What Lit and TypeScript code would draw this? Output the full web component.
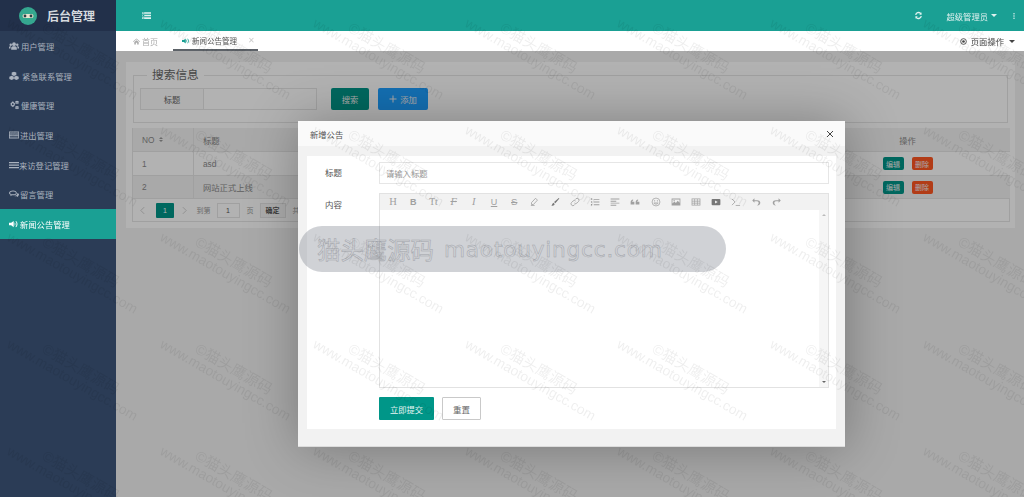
import { LitElement, html, css, svg } from "lit";
import { customElement } from "lit/decorators.js";

const I = (size: number, body: unknown, vb = "0 0 16 16") =>
  html`<svg class="ic" width=${size} height=${size} viewBox=${vb} fill="currentColor" stroke="none">${body}</svg>`;

const users = svg`<circle cx="8" cy="5" r="3"/><circle cx="2.8" cy="6" r="2"/><circle cx="13.2" cy="6" r="2"/><path d="M3.5 14V11c0-1.6 1.5-2.6 4.5-2.6s4.5 1 4.5 2.6v3zM0 12v-2c0-1 .9-1.8 2.6-1.8.5 0 .8 0 .8 0C2.6 9 2.4 10 2.4 11v1zM16 12v-2c0-1-.9-1.8-2.6-1.8-.5 0-.8 0-.8 0 .8.8 1 1.800 1 2.800v1z"/>`;
const cubes = svg`<path d="M8 1l3.700 1.500v3.800L8 8 4.300 6.300V2.500zM4.300 7.500l3.400 1.500v3.700l-3.400 1.700L.5 12.700V9zM11.700 7.500L15.500 9v3.700l-3.800 1.700-3.400-1.700V9z"/>`;
const cogs = svg`<path fill-rule="evenodd" d="M6 2.500l1.300.2.700 1.500 1.600.7-.5 1.800.5 1.800-1.600.7-.7 1.500-1.300.2-1.300-.2-.7-1.500-1.600-.7.500-1.800-.5-1.800 1.600-.7.700-1.500zM6 5.200a1.500 1.500 0 100 3 1.500 1.500 0 000-3z"/><path fill-rule="evenodd" d="M12.800 1l1.200.6 1 -.2.600 1.200-.5 1 .5 1-.6 1.200-1-.2-1.200.6-1.200-.6-1 .2-.6-1.200.5-1-.5-1 .6-1.200 1 .2zM12.800 3a.7.7 0 100 1.500.7.7 0 000-1.500zM12.800 9.500l1.200.6 1-.2.600 1.200-.5 1 .5 1-.6 1.200-1-.2-1.200.6-1.200-.6-1 .2-.6-1.200.5-1-.5-1 .6-1.200 1 .2zM12.800 11.500a.7.7 0 100 1.500.7.7 0 000-1.500z"/>`;
const listAlt = svg`<path fill-rule="evenodd" d="M0 2.500h16v11H0zM1.200 4v1.500h13.600V4zM1.200 7v1.500h13.600V7zM1.200 10v1.800h13.600V10z"/>`;
const bars = svg`<path d="M0 3h16v2H0zM0 7h16v2H0zM0 11h16v2H0z"/>`;
const comments = svg`<path fill-rule="evenodd" d="M6.500 2.500c3.400 0 6 1.700 6 3.800s-2.600 3.800-6 3.800c-.6 0-1.100 0-1.700-.2L2 11.500l.8-2.400C1.100 8.400 0 7.400 0 6.300 0 4.200 3.100 2.500 6.500 2.500zM6.500 4C4 4 1.700 5 1.700 6.300c0 1 1.400 1.900 3 2.200h3.300c2.200-.3 3-1.300 3-2.200C11 5 9 4 6.500 4z"/><path d="M13.400 6.500C15 7 16 8 16 9c0 .9-.6 1.700-1.800 2.300l.6 1.700-2.400-1.300c-1.500.2-3-.1-4-.7 2.600 0 5.300-1.300 5-4.500z"/>`;
const speaker = svg`<path d="M7.500 3v10L3.500 10H0V6h3.500zM9 5c1.600.6 1.600 5.400 0 6zM11 3c3.500 1.400 3.500 8.600 0 10l-.5-1c2-1.400 2-6.600 0-8z"/>`;

const menu = [
  { t: "用户管理", i: users, g: 2 },
  { t: "紧急联系管理", i: cubes, g: 3 },
  { t: "健康管理", i: cogs, g: 2 },
  { t: "进出管理", i: listAlt, g: 1 },
  { t: "来访登记管理", i: bars, g: 0 },
  { t: "留言管理", i: comments, g: 1 },
  { t: "新闻公告管理", i: speaker, g: 1, on: true },
];

const tb: unknown[] = [
  html`<span class="g serif">H</span>`,
  html`<span class="g serif b">B</span>`,
  html`<span class="g serif sm">Tt</span>`,
  html`<span class="g serif it st">F</span>`,
  html`<span class="g serif it">I</span>`,
  html`<span class="g un">U</span>`,
  html`<span class="g th">S</span>`,
  svg`<path d="M10.500 2l3 3-6.500 7H4v-3zM3 13.500h6" fill="none" stroke="currentColor" stroke-width="1.300"/>`,
  svg`<path d="M14 1.500l1 1-6.500 7.500-2-2zM5.500 9l2 2c-.5 2.500-3 3-5.500 3 1.500-1 1.500-4 3.500-5z" fill="#777"/>`,
  svg`<path d="M7 9.500a3 3 0 004.300 0l2.200-2.200a3 3 0 00-4.300-4.300L8 4.200M9 6.500a3 3 0 00-4.300 0L2.500 8.700a3 3 0 004.300 4.300L8 11.800" fill="none" stroke="currentColor" stroke-width="1.300"/>`,
  svg`<path d="M6 3h9v1.500H6zM6 7.300h9v1.500H6zM6 11.500h9V13H6zM1.500 2h2v2.500h-2zM1.500 6.800h2v2.500h-2zM1.500 11h2v2.500h-2z"/>`,
  svg`<path d="M1 2.500h14V4H1zM1 6h9v1.500H1zM1 9h14v1.500H1zM1 12.500h9V14H1z"/>`,
  svg`<path d="M1 12V8.500C1 6 2.300 4.500 5 4v1.700C4 6 3.500 6.800 3.500 7.500H7V12zM9 12V8.500C9 6 10.300 4.500 13 4v1.700c-1 .3-1.500 1.100-1.500 1.800H15V12z"/>`,
  svg`<g fill="none" stroke="currentColor" stroke-width="1.200"><circle cx="8" cy="8" r="6.300"/><path d="M4.500 9.500c1 2.600 6 2.600 7 0z"/></g><circle cx="5.800" cy="6" r="1"/><circle cx="10.200" cy="6" r="1"/>`,
  svg`<path fill-rule="evenodd" d="M1 2.500h14v11H1zM2.300 3.800v6.500l3.200-3 2.300 2.200 3-3.500 2.900 3V3.800z"/><circle cx="5" cy="5.800" r="1.100"/>`,
  svg`<path fill-rule="evenodd" d="M1 2.500h14v11H1zM2.200 3.700v2.300h3.200V3.700zM6.500 3.700v2.300h3V3.700zM10.600 3.700v2.300h3.200V3.700zM2.200 7v2.300h3.200V7zM6.500 7v2.300h3V7zM10.600 7v2.300h3.200V7zM2.200 10.300v2.100h3.200v-2.100zM6.500 10.300v2.100h3v-2.100zM10.600 10.300v2.100h3.200v-2.100z"/>`,
  svg`<path fill-rule="evenodd" d="M2.500 3h11c1 0 1.500.6 1.500 1.500v7c0 1-.5 1.500-1.500 1.500h-11C1.500 13 1 12.500 1 11.500v-7C1 3.600 1.500 3 2.500 3zM6.500 5.500v5l4.200-2.500z" fill="#777"/>`,
  svg`<path d="M1.500 3l5 5-5 5M7.500 13.500h7" fill="none" stroke="currentColor" stroke-width="1.300"/>`,
  svg`<path d="M5.500 2L2 5.500 5.500 9V6.600h4.300c3 0 3.700 4.800-.5 6.900 4.500 0 6-2.800 5.500-5.100-.5-2-2-3.400-5-3.400H5.500z"/>`,
  svg`<path d="M10.500 2L14 5.500 10.500 9V6.600H6.200c-3 0-3.700 4.800.5 6.900-4.500 0-6-2.800-5.500-5.100.5-2 2-3.400 5-3.400h4.300z"/>`,
];

const xs = [6, 159, 312, 464, 616, 769, 922];
const ys = [22, 129, 236, 343, 450];

@customElement("app-root")
export class AppRoot extends LitElement {
  static styles = css`
    :host {
      display: block; position: relative; width: 1024px; height: 497px; overflow: hidden;
      font-family: "Liberation Sans", "Noto Sans CJK SC", sans-serif;
      font-size: 8.3px; color: #777;
      filter: blur(0.35px);
    }
    .ic { display: block; flex: none; }
    .app { display: grid; grid-template-columns: 116px 1fr; height: 100%; }
    .side { background: #2b3c56; display: flex; flex-direction: column; color: #aab2be; }
    .logo { height: 31px; background: #22304a; display: flex; align-items: center; gap: 10px; padding-left: 19px; box-sizing: border-box; }
    .logo b { font-size: 12px; color: #d5d9de; font-weight: 700; }
    .logo svg { display: block; }
    .item { height: 29.7px; display: flex; align-items: center; padding-left: 9px; }
    .item.on { background: #1aa094; color: #fff; }
    .main { display: flex; flex-direction: column; min-width: 0; }
    .top { height: 31px; flex: none; background: #1aa094; color: #dff1ef; display: flex; align-items: center; padding-left: 26px; }
    .top .sp { flex: 1; }
    .user { margin-left: 24px; display: flex; align-items: center; gap: 3px; }
    .caret { width: 0; height: 0; border: 3px solid transparent; border-top: 3.500px solid currentColor; border-bottom: 0; }
    .dots { margin: 0 7px 0 14px; }
    .tabs { height: 20px; flex: none; background: #fff; display: flex; align-items: stretch; box-sizing: border-box; }
    .home { display: flex; align-items: center; gap: 2px; color: #aaa; padding-left: 17px; width: 57px; box-sizing: border-box; font-size: 8px; }
    .tab { width: 85px; box-sizing: border-box; display: flex; align-items: center; padding-left: 9px; gap: 2px; color: #555; border-bottom: 2px solid #5d6268; font-size: 7.500px; padding-top: 1px; }
    .tab .sound { color: #1aa094; }
    .tab .x { margin-left: 9px; color: #ccc; }
    .ops { margin-left: auto; display: flex; align-items: center; gap: 4px; color: #444; padding-right: 9px; }
    .content { flex: 1; position: relative; background: #f2f2f2; padding: 11px 9px 0 10px; min-height: 0; }
    .card { background: #fff; padding: 4px 5px 6px 6px; }
    fieldset { margin: 0 2px 0 1px; padding: 4px 0 13px 6px; border: 1px solid #e6e6e6; height: 57px; box-sizing: border-box; display: flex; min-width: 0; }
    legend { margin-left: 7px; padding: 0 5px; font-size: 11.700px; line-height: 18px; color: #666; }
    .search { display: flex; align-items: stretch; height: 22px; }
    .lab { width: 64px; box-sizing: border-box; border: 1px solid #e6e6e6; background: #fbfbfb; display: flex; align-items: center; justify-content: center; color: #666; }
    .inp { width: 113px; box-sizing: border-box; border: 1px solid #e6e6e6; border-left: 0; background: #fff; }
    .btn { display: flex; align-items: center; justify-content: center; border-radius: 2px; color: #f2f2f2; }
    .b1 { width: 38px; margin-left: 14px; background: #009688; }
    .b2 { width: 50px; margin-left: 9px; background: #1e9fff; gap: 3px; }
    .table { margin-top: 5px; color: #8a8a8a; }
    .tr { display: grid; grid-template-columns: 60px 1fr 205px; height: 24px; border-bottom: 1px solid #e6e6e6; box-sizing: border-box; align-items: center; border-left: 1px solid #e6e6e6; }
    .tr.alt { background: #f2f2f2; }
    .tr > div { padding-left: 9px; height: 100%; display: flex; align-items: center; box-sizing: border-box; }
    .tr > div + div { border-left: 1px solid #e6e6e6; }
    .tr > .act { justify-content: center; padding: 0; gap: 8px; border-left: 0; }
    .no { gap: 5px; }
    .sort { display: flex; flex-direction: column; gap: 1.500px; }
    .sort i { width: 0; height: 0; border: 2.200px solid transparent; }
    .sort i:first-child { border-bottom: 2.500px solid #999; border-top: 0; }
    .sort i:last-child { border-top: 2.500px solid #999; border-bottom: 0; }
    .mini { width: 21px; height: 13px; border-radius: 2px; display: flex; align-items: center; justify-content: center; color: #f2f2f2; font-size: 7px; }
    .edit { background: #009688; }
    .del { background: #ff5722; }
    .pager { height: 23px; display: flex; align-items: center; border: 1px solid #e6e6e6; border-top: 0; box-sizing: border-box; padding-left: 5px; color: #999; font-size: 7px; }
    .pg1 { width: 18px; height: 15px; margin-left: 9px; background: #009688; color: #fff; display: flex; align-items: center; justify-content: center; border-radius: 1px; }
    .pgn { margin-left: 5.500px; }
    .pgto { margin-left: 8px; }
    .pgi { width: 23px; height: 15px; margin: 0 7px 0 6px; border: 1px solid #e6e6e6; box-sizing: border-box; background: #fff; display: flex; align-items: center; justify-content: center; color: #555; }
    .pgb { width: 26px; height: 15px; margin: 0 7px 0 6px; border: 1px solid #e6e6e6; box-sizing: border-box; background: #f6f6f6; display: flex; align-items: center; justify-content: center; color: #555; font-weight: 700; }
    .shade { position: absolute; inset: 0; background: rgba(0, 0, 0, 0.3); }

    .modal { position: absolute; left: 298px; top: 121px; width: 547px; height: 326px; background: #f2f2f2; box-shadow: 1px 1px 50px rgba(0, 0, 0, 0.3); display: flex; flex-direction: column; border-bottom: 1px solid #dcdcdc; box-sizing: border-box; }
    .mhead { height: 25px; flex: none; background: #fafafa; display: flex; align-items: center; justify-content: space-between; padding: 0 11px 0 12px; color: #555; }
    .mbody { flex: none; margin: 10px 9px 0; height: 273px; background: #fff; padding: 6px 7px 0 0; box-sizing: border-box; display: flex; flex-direction: column; }
    .row { display: grid; grid-template-columns: 72px 1fr; }
    .row .l { padding-left: 18px; font-size: 8.500px; color: #555; padding-top: 6px; line-height: 10px; }
    .minp { height: 22px; border: 1px solid #e6e6e6; box-sizing: border-box; display: flex; align-items: center; padding-left: 6px; color: #999; }
    .row.r2 { margin-top: 9px; }
    .r2 .l { padding-top: 7px; }
    .editor { height: 195px; border: 1px solid #e2e2e2; box-sizing: border-box; display: flex; flex-direction: column; }
    .bar { height: 16px; background: #f2f2f2; flex: none; display: grid; grid-template-columns: repeat(20, 20.200px); padding-left: 3px; color: #a0a0a0; align-items: center; }
    .bar > * { justify-self: center; }
    .g { font-size: 10.500px; line-height: 12px; font-family: "Liberation Serif", serif; position: relative; }
    .g.sm { font-size: 9.500px; }
    .g.b { font-weight: 700; font-family: "Liberation Sans", sans-serif; font-size: 9px; }
    .g.it { font-style: italic; }
    .g.st { text-decoration: line-through; }
    .g.un { text-decoration: underline; font-family: "Liberation Sans", sans-serif; font-size: 9px; }
    .g.th { text-decoration: line-through; font-family: "Liberation Sans", sans-serif; font-size: 9.500px; }
    .earea { flex: 1; display: flex; justify-content: flex-end; }
    .scroll { width: 9px; background: #f6f6f6; display: flex; flex-direction: column; justify-content: space-between; align-items: center; padding: 4px 0; box-sizing: border-box; }
    .scroll i { width: 0; height: 0; border: 2px solid transparent; }
    .scroll i:first-child { border-bottom: 2.500px solid #bbb; border-top: 0; }
    .scroll i:last-child { border-top: 2.500px solid #666; border-bottom: 0; }
    .acts { margin: 9px 0 0 72px; display: flex; gap: 8px; height: 23px; }
    .submit { width: 55px; background: #009688; color: #e8f5f3; border-radius: 1px; display: flex; align-items: center; justify-content: center; }
    .reset { width: 39px; border: 1px solid #c9c9c9; box-sizing: border-box; border-radius: 1px; color: #666; font-size: 8.500px; display: flex; align-items: center; justify-content: center; }
    .close { color: #222; }

    .pill { position: absolute; left: 299px; top: 226px; width: 427px; height: 46px; border-radius: 23px; background: rgba(100, 105, 120, 0.3); display: flex; align-items: center; padding-left: 18px; box-sizing: border-box; white-space: pre; font-size: 23.400px; color: transparent; -webkit-text-stroke: 0.5px #a2a4aa; }
    .pill .en { margin-left: 10px; font-family: "DejaVu Sans", sans-serif; font-size: 21.700px; letter-spacing: 0.75px; }

    .wm { position: absolute; inset: 0; pointer-events: none; filter: blur(0.3px); }
    .wm text { fill: rgba(0, 0, 0, 0.065); font-family: "Liberation Sans", "Noto Sans CJK SC", sans-serif; }
    .wm .t1 { font-size: 15px; }
    .wm .t2 { font-size: 13.800px; }
  `;

  render() {
    return html`
      <div class="app">
        <aside class="side">
          <div class="logo">
            <svg width="18" height="18" viewBox="0 0 18 18"><circle cx="9" cy="9" r="9" fill="#35a78f"/><rect x="3.500" y="7" width="11" height="4" rx="2" fill="#e8e4cf"/><circle cx="6" cy="9" r="1.400" fill="#2f3f46"/><circle cx="12" cy="9" r="1.400" fill="#2f3f46"/></svg>
            <b>后台管理</b>
          </div>
          ${menu.map(
            (m) => html`<div class="item ${m.on ? "on" : ""}" style="gap:${m.g}px">${I(10, m.i)}<span>${m.t}</span></div>`
          )}
        </aside>
        <div class="main">
          <header class="top">
            ${I(9, svg`<path d="M0 2h16v3H0zM0 6.500h16v3H0zM0 11h16v3H0z"/><path d="M4 2.800h-3v1.400h3zM4 7.300h-3v1.400h3zM4 11.800h-3v1.400h3z" fill="#1aa094"/>`)}
            <span class="sp"></span>
            ${I(9, svg`<path d="M13.500 2.500v4.200H9.300l1.600-1.600A4 4 0 004.200 7H2a6.100 6.100 0 0110.300-3.800zM2.500 13.500V9.300h4.200l-1.600 1.600A4 4 0 0011.800 9H14a6.100 6.100 0 01-10.300 3.800z"/>`)}
            <span class="user">超级管理员 <i class="caret"></i></span>
            <span class="dots">${I(6, svg`<circle cx="8" cy="2" r="2"/><circle cx="8" cy="8" r="2"/><circle cx="8" cy="14" r="2"/>`)}</span>
          </header>
          <nav class="tabs">
            <div class="home">${I(7, svg`<path d="M8 1l8 7-1 1-7-6-7 6-1-1zM3 9l5-4 5 4v6H9.500v-4h-3v4H3z"/>`)}<span>首页</span></div>
            <div class="tab"><span class="sound">${I(8, speaker)}</span><span>新闻公告管理</span><span class="x">✕</span></div>
            <div class="ops">
              ${I(7, svg`<circle cx="8" cy="8" r="6.500" fill="none" stroke="currentColor" stroke-width="2"/><circle cx="8" cy="8" r="3"/>`)}
              <span>页面操作</span><i class="caret" style="margin-left:1px"></i>
            </div>
          </nav>
          <section class="content">
            <div class="card">
              <fieldset>
                <legend>搜索信息</legend>
                <div class="search">
                  <div class="lab">标题</div><div class="inp"></div>
                  <div class="btn b1">搜索</div>
                  <div class="btn b2">${I(8, svg`<path d="M7 1h2v6h6v2H9v6H7V9H1V7h6z"/>`)}添加</div>
                </div>
              </fieldset>
              <div class="table">
                <div class="tr alt"><div class="no">NO <span class="sort"><i></i><i></i></span></div><div>标题</div><div class="act">操作</div></div>
                <div class="tr"><div>1</div><div>asd</div><div class="act"><span class="mini edit">编辑</span><span class="mini del">删除</span></div></div>
                <div class="tr alt" style="height:23px"><div>2</div><div>网站正式上线</div><div class="act"><span class="mini edit">编辑</span><span class="mini del">删除</span></div></div>
                <div class="pager">
                  ${I(9, svg`<path d="M11 2L5 8l6 6" fill="none" stroke="#bbb" stroke-width="1.200"/>`)}
                  <span class="pg1">1</span>
                  <span class="pgn">${I(9, svg`<path d="M5 2l6 6-6 6" fill="none" stroke="#bbb" stroke-width="1.200"/>`)}</span>
                  <span class="pgto">到第</span><span class="pgi">1</span><span>页</span><span class="pgb">确定</span><span>共 2 条</span>
                </div>
              </div>
            </div>
            <div class="shade"></div>
          </section>
        </div>
      </div>

      <div class="modal" role="dialog">
        <div class="mhead"><span>新增公告</span><span class="close">${I(8, svg`<path d="M2 2l12 12M14 2L2 14" fill="none" stroke="currentColor" stroke-width="1.700"/>`)}</span></div>
        <div class="mbody">
          <div class="row"><div class="l">标题</div><div class="f"><div class="minp">请输入标题</div></div></div>
          <div class="row r2"><div class="l">内容</div>
            <div class="f">
              <div class="editor">
                <div class="bar">${tb.map((b, i) => (i < 7 ? b : I(10, b)))}</div>
                <div class="earea"><div class="scroll"><i></i><i></i></div></div>
              </div>
            </div>
          </div>
          <div class="acts"><div class="submit">立即提交</div><div class="reset">重置</div></div>
        </div>
      </div>

      <div class="pill"><span>猫头鹰源码</span><span class="en">maotouyingcc.com</span></div>

      <svg class="wm" width="1024" height="497">
        ${xs.map((x) =>
          ys.map(
            (y) => svg`
              <text class="t1" transform="translate(${x + 35} ${y + 9}) rotate(30)">©猫头鹰源码</text>
              <text class="t2" transform="translate(${x} ${y + 4}) rotate(30)">www.maotouyingcc.com</text>`
          )
        )}
      </svg>
    `;
  }
}
